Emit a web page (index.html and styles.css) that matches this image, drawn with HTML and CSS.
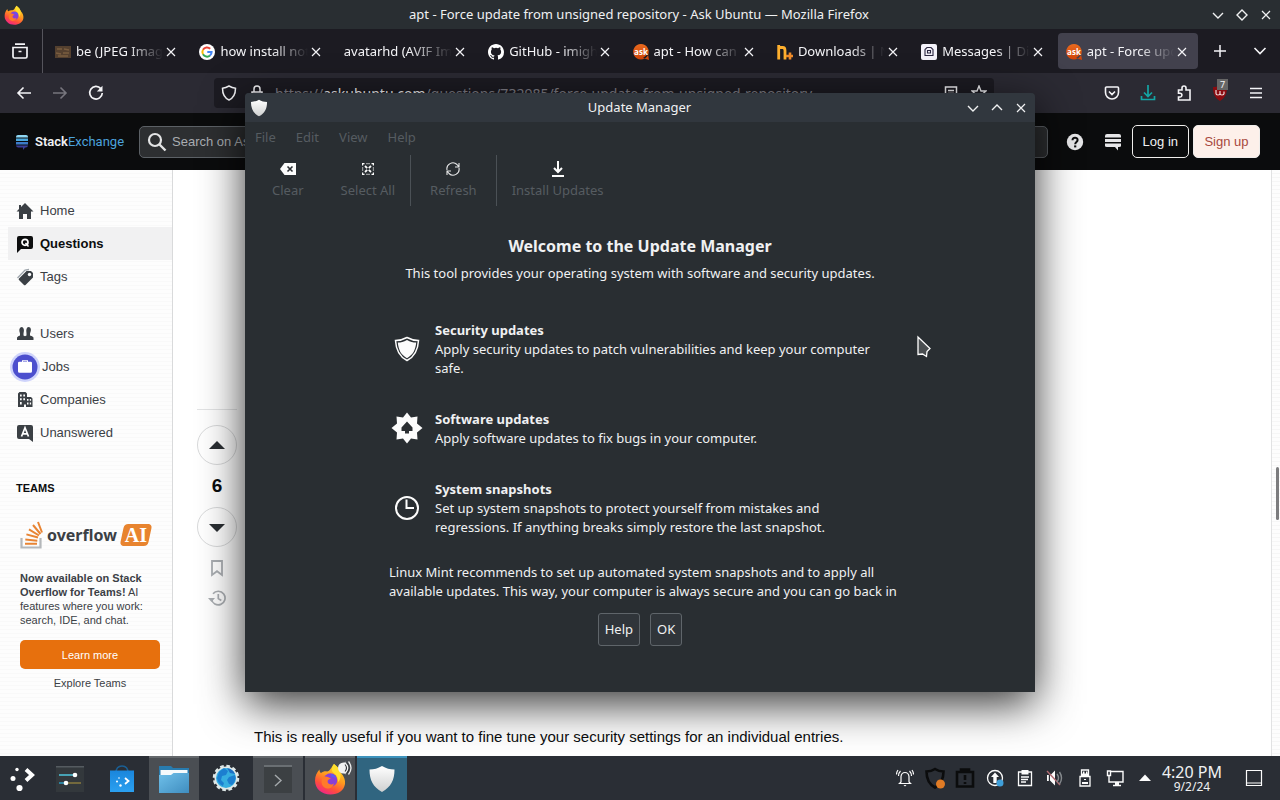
FILE: index.html
```html
<!DOCTYPE html>
<html lang="en">
<head>
<meta charset="utf-8">
<title>apt - Force update from unsigned repository - Ask Ubuntu</title>
<link rel="stylesheet" href="styles.css">
</head>
<body>
<svg class="defs" aria-hidden="true">
  <defs>
    <linearGradient id="fxBody" x1="0.8" y1="0" x2="0.3" y2="1"><stop offset="0" stop-color="#ffe226"/><stop offset="0.45" stop-color="#ff9a1f"/><stop offset="0.75" stop-color="#ff4f3a"/><stop offset="1" stop-color="#f0238c"/></linearGradient>
    <linearGradient id="folderGrad" x1="0" y1="0" x2="1" y2="1"><stop offset="0" stop-color="#6fc0ea"/><stop offset="1" stop-color="#3f8dbf"/></linearGradient>
    <linearGradient id="bagGrad" x1="0" y1="0" x2="0" y2="1"><stop offset="0" stop-color="#1a86dc"/><stop offset="1" stop-color="#2ba0f0"/></linearGradient>
    <linearGradient id="greyShield" x1="0" y1="0" x2="0" y2="1"><stop offset="0" stop-color="#ffffff"/><stop offset="1" stop-color="#cfd0d0"/></linearGradient>
    <linearGradient id="ask" x1="0" y1="0" x2="0" y2="1"><stop offset="0" stop-color="#e96a1e"/><stop offset="1" stop-color="#cf4208"/></linearGradient>
  </defs>
  <symbol id="i-close" viewBox="0 0 16 16"><path d="M4 4l8 8M12 4l-8 8" fill="none" stroke="currentColor" stroke-width="1.2"/></symbol>
  <symbol id="i-down" viewBox="0 0 16 16"><path d="M3 6l5 5 5-5" fill="none" stroke="currentColor" stroke-width="1.4"/></symbol>
  <symbol id="i-up" viewBox="0 0 16 16"><path d="M3 10l5-5 5 5" fill="none" stroke="currentColor" stroke-width="1.4"/></symbol>
  <symbol id="i-firefox" viewBox="0 0 32 32">
    <path d="M20 1c4 3 6 6 7 9 3 3 4.500 7 4 11-1 6.500-7 10.500-14.500 10.500C8 31.500 1 26 1 17.500 1 13 3 9 5.500 6.500c0 2 .5 3 1.500 3.500 2-1.500 4-2 6-1.500 3 0 4-4 7-7.500z" fill="url(#fxBody)"/>
    <circle cx="16.500" cy="17" r="6.800" fill="#8a3fd6"/>
    <path d="M9 14c3-1 6 0 8 2-3 0-4 2-3 4 1 1.500 4 2 6 .5-1 4-4 5.500-7 5-5-1-7-6-4-11.500z" fill="#ff7a2a"/>
    <path d="M20 1c4 3 6 6 6.500 9 .5 5-1 8-2.500 9 0-5-2-7.500-5-9.500-2-2.500-1-6 1-8.500z" fill="#ffdf2e"/>
    <path d="M17 11c3 0 5 2 5.500 5-1-1-3-2-5-1.500z" fill="#5b5ef0"/>
  </symbol>
  <symbol id="i-ask" viewBox="0 0 16 16">
    <path d="M8 0a7.800 7.800 0 1 1-.1 0zM10 14l6 2-1-6z" fill="url(#ask)"/>
    <text x="8" y="11" text-anchor="middle" class="ask-word">ask</text>
  </symbol>
  <symbol id="i-shield" viewBox="0 0 28 28"><path d="M14 1c4 2.500 8 3.500 12.500 3.500C26.500 15 23 22 14 27 5 22 1.500 15 1.500 4.500 6 4.500 10 3.500 14 1z" fill="url(#greyShield)"/></symbol>
</svg>

<div class="desktop">
  <div class="browser">
    <header class="titlebar">
      <svg class="i20"><use href="#i-firefox"/></svg>
      <h1 class="titlebar-text">apt - Force update from unsigned repository - Ask Ubuntu — Mozilla Firefox</h1>
      <div class="win-buttons">
        <button aria-label="Minimize"><svg class="i16"><use href="#i-down"/></svg></button>
        <button aria-label="Maximize"><svg class="i16" viewBox="0 0 16 16"><path d="M8 3l5 5-5 5-5-5z" fill="none" stroke="currentColor" stroke-width="1.400"/></svg></button>
        <button aria-label="Close"><svg class="i16"><use href="#i-close"/></svg></button>
      </div>
    </header>

    <nav class="tabbar">
      <button class="tab-side history-btn" aria-label="Recent browsing"><svg class="i20" viewBox="0 0 20 20"><path d="M5 3.200h10M3 6.500h14v9a1.500 1.500 0 0 1-1.500 1.500h-11A1.500 1.500 0 0 1 3 15.500zM8.500 10.500h3" fill="none" stroke="currentColor" stroke-width="1.700"/></svg></button>
      <div class="tabs">
        <div class="tab"><svg class="i16" viewBox="0 0 16 16"><path d="M0 2h16v12H0z" fill="#54402f"/><path d="M2 5h5M9 5l5 1M1 9l5 1M8 9h6M3 12h10" stroke="#7a5d40" stroke-width="1.300"/></svg><a href="#">be (JPEG Image, 1920)</a><button aria-label="Close tab"><svg class="i16"><use href="#i-close"/></svg></button></div>
        <div class="tab"><svg class="i16" viewBox="0 0 16 16"><circle cx="8" cy="8" r="8" fill="#fff"/><g fill="none" stroke-width="2"><path d="M11.200 4.700A4.600 4.600 0 0 0 4 5.700" stroke="#ea4335"/><path d="M4 5.700a4.600 4.600 0 0 0 0 4.600" stroke="#fbbc05"/><path d="M4 10.300a4.600 4.600 0 0 0 7 1.200" stroke="#34a853"/><path d="M11 11.500A4.600 4.600 0 0 0 12.600 8H8.300" stroke="#4285f4"/></g></svg><a href="#">how install notepad</a><button aria-label="Close tab"><svg class="i16"><use href="#i-close"/></svg></button></div>
        <div class="tab"><a href="#">avatarhd (AVIF Image, 800)</a><button aria-label="Close tab"><svg class="i16"><use href="#i-close"/></svg></button></div>
        <div class="tab"><svg class="i16" viewBox="0 0 16 16"><path fill="#fff" d="M8 0C3.580 0 0 3.580 0 8c0 3.540 2.290 6.530 5.470 7.590.4.070.550-.170.550-.380 0-.190-.010-.820-.010-1.490-2.010.370-2.530-.490-2.690-.940-.090-.230-.480-.940-.820-1.130-.280-.150-.680-.520-.010-.530.630-.010 1.080.580 1.230.820.720 1.210 1.870.870 2.330.660.070-.520.280-.870.510-1.070-1.780-.200-3.640-.890-3.640-3.950 0-.870.310-1.590.820-2.150-.080-.200-.360-1.020.080-2.120 0 0 .670-.210 2.200.820a7.600 7.600 0 0 1 4 0c1.530-1.040 2.200-.820 2.200-.820.440 1.100.160 1.920.080 2.120.510.560.820 1.270.820 2.150 0 3.070-1.870 3.750-3.650 3.950.290.250.540.730.540 1.480 0 1.070-.010 1.930-.010 2.200 0 .210.150.460.550.380A8 8 0 0 0 16 8c0-4.420-3.580-8-8-8z"/></svg><a href="#">GitHub - imightbe</a><button aria-label="Close tab"><svg class="i16"><use href="#i-close"/></svg></button></div>
        <div class="tab"><svg class="i16"><use href="#i-ask"/></svg><a href="#">apt - How can I get</a><button aria-label="Close tab"><svg class="i16"><use href="#i-close"/></svg></button></div>
        <div class="tab"><svg class="i16" viewBox="0 0 16 16"><path d="M1.700 15.500V1M1.700 3.500h4q2.300 0 2.300 3v9" fill="none" stroke="#ffb02e" stroke-width="2.800"/><path d="M9 12h7M13 8.500v7" stroke="#f08c2a" stroke-width="2.600"/></svg><a href="#">Downloads | Nexus</a><button aria-label="Close tab"><svg class="i16"><use href="#i-close"/></svg></button></div>
        <div class="tab"><svg class="i16" viewBox="0 0 16 16"><rect width="16" height="16" rx="2" fill="#f4f2fa"/><path d="M4 11.500V5.500l2-2h4l2 2v6zM6.500 6.500h3v2.500h-3zM4 11.500h8" fill="none" stroke="#2b2740" stroke-width="1.100"/></svg><a href="#">Messages | Discuss</a><button aria-label="Close tab"><svg class="i16"><use href="#i-close"/></svg></button></div>
        <div class="tab active"><svg class="i16"><use href="#i-ask"/></svg><a href="#" aria-current="page">apt - Force update</a><button aria-label="Close tab"><svg class="i16"><use href="#i-close"/></svg></button></div>
      </div>
      <button class="tab-side" aria-label="New tab"><svg class="i16" viewBox="0 0 16 16"><path d="M8 2v12M2 8h12" stroke="currentColor" stroke-width="1.500"/></svg></button>
      <button class="tab-side" aria-label="List all tabs"><svg class="i16" viewBox="0 0 16 16"><path d="M2.500 5l5.500 5.500L13.500 5" fill="none" stroke="currentColor" stroke-width="1.600"/></svg></button>
    </nav>

    <div class="navbar">
      <div class="nav-group">
        <button aria-label="Back"><svg class="i16" viewBox="0 0 16 16"><path d="M7.500 2.500L2 8l5.500 5.500M2 8h13" fill="none" stroke="currentColor" stroke-width="1.600"/></svg></button>
        <button class="dim" aria-label="Forward"><svg class="i16" viewBox="0 0 16 16"><path d="M8.500 2.500L14 8l-5.500 5.500M14 8H1" fill="none" stroke="currentColor" stroke-width="1.600"/></svg></button>
        <button aria-label="Reload"><svg class="i16" viewBox="0 0 16 16"><path d="M12.800 3.600A6.300 6.300 0 1 0 14.300 8" fill="none" stroke="currentColor" stroke-width="1.700"/><path d="M14.500.8v5.700H8.800z" fill="currentColor"/></svg></button>
      </div>
      <div class="urlbar">
        <svg class="i16" viewBox="0 0 16 16"><path d="M8 1c2.500 1.500 4 2 6.500 2.300C14.500 9 12.500 13 8 15 3.500 13 1.500 9 1.500 3.300 4 3 5.500 2.500 8 1z" fill="none" stroke="currentColor" stroke-width="1.500"/></svg>
        <svg class="i16" viewBox="0 0 16 16"><path d="M3 7h10v7H3zM5 7V4a3 3 0 0 1 6 0v3" fill="none" stroke="currentColor" stroke-width="1.500"/></svg>
        <a class="url" href="#">https://<b>askubuntu.com</b>/questions/732985/force-update-from-unsigned-repository</a>
        <svg class="i16" viewBox="0 0 16 16"><path d="M2.500 2h11v12h-11zM5 5.500h6M5 8.500h6" fill="none" stroke="currentColor" stroke-width="1.500"/></svg>
        <svg class="i16" viewBox="0 0 16 16"><path d="M8 1l2 5h5l-4 3.500 1.500 5L8 11.500l-4.500 3 1.500-5L1 6h5z" fill="none" stroke="currentColor" stroke-width="1.400"/></svg>
      </div>
      <div class="nav-group">
        <button aria-label="Pocket"><svg class="i16" viewBox="0 0 16 16"><path d="M2.500 2h11a1 1 0 0 1 1 1v4.500a6.500 6.500 0 0 1-13 0V3a1 1 0 0 1 1-1zM5 6.500l3 3 3-3" fill="none" stroke="currentColor" stroke-width="1.600"/></svg></button>
        <button class="teal" aria-label="Downloads"><svg class="i16" viewBox="0 0 16 16"><path d="M8 0v11M4 7.500l4 4 4-4M1.500 11v3.500h13V11" fill="none" stroke="currentColor" stroke-width="1.700"/></svg></button>
        <button aria-label="Extensions"><svg class="i16" viewBox="0 0 16 16"><path d="M2.500 5H6V3a2 2 0 0 1 4 0v2h4v10H2.500v-3H4a1.800 1.800 0 0 0 0-3.800H2.500z" fill="none" stroke="currentColor" stroke-width="1.600"/></svg></button>
        <button class="ublock" aria-label="uBlock Origin"><svg class="i16" viewBox="0 0 16 16"><path d="M8 0c2 1.500 4 2 7 2 0 7-2 11-7 14C3 13 1 9 1 2c3 0 5-.5 7-2z" fill="#8a0b10"/><path d="M4 5v3.500q0 1.500 2 1.500t2-1.500V6M8 8.500q0 1.500 2 1.500t2-1.500V6.500" fill="none" stroke="#f0d8d8" stroke-width="1.200"/></svg><span class="badge">7</span></button>
        <button aria-label="Menu"><svg class="i16" viewBox="0 0 16 16"><path d="M2 3.500h12M2 8h12M2 12.500h12" stroke="currentColor" stroke-width="1.500"/></svg></button>
      </div>
    </div>

    <div class="se-header">
      <a class="se-logo" href="#"><svg class="i16" viewBox="0 0 16 16"><path d="M2 3.500V3q0-2 2-2h8q2 0 2 2v.5z" fill="#8fd8f5"/><path d="M2 4.500h12v2.500H2z" fill="#4aa8dc"/><path d="M2 8h12v2.500H2z" fill="#3c7cc8"/><path d="M2 11.500h12q0 1.500-2 2h-1L9 16v-2.500H4q-2-.5-2-2z" fill="#3b3f98"/></svg><span>Stack<i>Exchange</i></span></a>
      <label class="se-search"><svg class="i20" viewBox="0 0 20 20"><circle cx="8" cy="8" r="6" fill="none" stroke="currentColor" stroke-width="2.200"/><path d="M12.500 12.500l6 6" stroke="currentColor" stroke-width="2.400"/></svg><input type="text" placeholder="Search on Ask Ubuntu…" aria-label="Search"></label>
      <button class="se-icon" aria-label="Help"><svg class="i18" viewBox="0 0 18 18"><circle cx="9" cy="9" r="8.200" fill="#e6e6e8"/><path d="M6.500 7.200C6.500 4 11.600 4 11.600 7 11.600 9 9.200 9 9.200 11.200" fill="none" stroke="#0c0d0e" stroke-width="2"/><path d="M8.100 12.400h2.200v2H8.100z" fill="#0c0d0e"/></svg></button>
      <button class="se-icon" aria-label="Site list"><svg class="i18" viewBox="0 0 18 18"><path d="M1 3q0-2 2-2h12q2 0 2 2v1.500H1zM1 6h16v3H1zM1 10.500h16V13q0 1-2 1h-1v3.500L11 14H3q-2 0-2-1z" fill="#e6e6e8"/></svg></button>
      <a class="btn-login" href="#">Log in</a>
      <a class="btn-signup" href="#">Sign up</a>
    </div>

    <div class="page">
      <aside class="sidebar">
        <nav>
          <a class="item" href="#"><svg class="i18" viewBox="0 0 18 18"><path d="M9 1l8.500 8.500H15V17h-4v-5H7v5H3V9.500H.5L3 7V3h2v2z" fill="#3b4045"/></svg>Home</a>
          <a class="item current" href="#"><svg class="i18" viewBox="0 0 18 18"><path d="M3 1h12q2 0 2 2v9q0 2-2 2H5l-4 4V3q0-2 2-2z" fill="#0c0d0e"/><circle cx="9" cy="7.300" r="3" fill="none" stroke="#fff" stroke-width="1.700"/><path d="M9.500 8l3 3.500" stroke="#fff" stroke-width="1.500"/></svg>Questions</a>
          <a class="item" href="#"><svg class="i18" viewBox="0 0 18 18"><path d="M10.500 3H15l2 2v4.500L9.500 17q-1 .5-1.500 0L3 12q-.8-.8 0-1.500z" fill="#3b4045"/><path d="M1.500 10L9 2l4-.5" fill="none" stroke="#9fa6ad" stroke-width="1.300"/><circle cx="13.500" cy="6.500" r="1.700" fill="#fff"/></svg>Tags</a>
          <a class="item group" href="#"><svg class="i18" viewBox="0 0 18 18"><path d="M1 15v-2.500q1-1.500 3-2V8.500Q2 3 5.500 2 9 2.500 7.500 8.500v2l1.500.7 1.500-.7v-2q-1-6 2-6.500 4 .5 1.500 6.500v2q2.500.5 3.500 2V15z" fill="#3b4045"/></svg>Users</a>
          <a class="item jobs" href="#"><svg class="i30" viewBox="0 0 30 30"><circle cx="15" cy="15" r="15" fill="#cfd4fb"/><circle cx="15" cy="15" r="12.500" fill="#4c4fce"/><path fill-rule="evenodd" d="M8 11q0-1.300 1.300-1.300H12V8.200h6v1.500h2.700q1.300 0 1.300 1.300v8.200q0 1.500-1.500 1.500h-11Q8 20.700 8 19.200zM13 9.200v.6h4v-.6z" fill="#fff"/></svg>Jobs</a>
          <a class="item" href="#"><svg class="i18" viewBox="0 0 18 18"><path fill-rule="evenodd" d="M3.500 1h6L11 2.500V6h4l1.500 1.500V16H10v-2.500H8V16H2V2.500zM4 3.500v2h1.700v-2zM7.300 3.500v2H9v-2zM4 7.200v2h1.700v-2zM7.300 7.200v2H9v-2zM11 8v1.800h1.500V8zM13.800 8v1.800h1.300V8zM4 11v2.500h1.700V11zM11 11.500v2h1.500v-2zM13.800 11.500v2h1.300v-2z" fill="#3b4045"/></svg>Companies</a>
          <a class="item" href="#"><svg class="i18" viewBox="0 0 18 18"><path d="M3 1h12q2 0 2 2v15l-4-3H3q-2 0-2-2V3q0-2 2-2z" fill="#3b4045"/><path d="M5.500 12.500L9 3.800l3.500 8.700M6.500 9.800h5" fill="none" stroke="#fff" stroke-width="1.700"/></svg>Unanswered</a>
        </nav>
        <h2 class="teams-title">Teams</h2>
        <div class="teams">
          <div class="ai-logo">
            <svg viewBox="0 0 24 28" class="ai-mark"><path d="M1.500 17v9.500h19V17" fill="none" stroke="#b4b7ba" stroke-width="2.200"/><path d="M5 22.800h12M5.300 18.500l12 1.200M6.400 13.400l11.600 3.100M9 8.300l10 6.200M13 4l7.500 9M18 1l4 10.500" stroke="#e88433" stroke-width="2"/></svg>
            <span class="ai-word">overflow</span><span class="ai-tag">AI</span>
          </div>
          <p><b>Now available on Stack Overflow for Teams!</b> AI features where you work: search, IDE, and chat.</p>
          <a class="learn" href="#">Learn more</a>
          <a class="explore" href="#">Explore Teams</a>
        </div>
      </aside>
      <main class="post">
        <div class="votes">
          <button class="vote" aria-label="Up vote"><svg class="i18" viewBox="0 0 18 18"><path d="M1 13h16L9 5z" fill="#2b2f33"/></svg></button>
          <span class="score">6</span>
          <button class="vote" aria-label="Down vote"><svg class="i18" viewBox="0 0 18 18"><path d="M1 6h16l-8 8z" fill="#2b2f33"/></svg></button>
          <button class="mini" aria-label="Bookmark"><svg class="i18" viewBox="0 0 18 18"><path d="M4 2h10v14l-5-3.800L4 16z" fill="none" stroke="#aaaeb2" stroke-width="1.800"/></svg></button>
          <button class="mini" aria-label="Timeline"><svg class="i18" viewBox="0 0 18 18"><path d="M3.500 10A6.800 6.800 0 1 0 5 4.700M10.300 5v4.500l3 2" fill="none" stroke="#aaaeb2" stroke-width="1.700"/><path d="M0 9h7l-3.500 4z" fill="#aaaeb2"/></svg></button>
        </div>
        <p class="post-text">This is really useful if you want to fine tune your security settings for an individual entries.</p>
      </main>
      <div class="scroll"><span class="thumb"></span></div>
    </div>
  </div>

  <section class="dialog" aria-label="Update Manager">
    <header class="dialog-title">
      <svg class="i18"><use href="#i-shield"/></svg>
      <h2>Update Manager</h2>
      <div class="win-buttons">
        <button aria-label="Minimize"><svg class="i16"><use href="#i-down"/></svg></button>
        <button aria-label="Maximize"><svg class="i16"><use href="#i-up"/></svg></button>
        <button aria-label="Close"><svg class="i16"><use href="#i-close"/></svg></button>
      </div>
    </header>
    <div class="menubar"><button>File</button><button>Edit</button><button>View</button><button>Help</button></div>
    <div class="tools">
      <button><svg class="i16" viewBox="0 0 16 16"><path d="M0 8l4.500-6H16v12H4.500z" fill="#fcfcfc"/><path d="M7.500 5.500l5 5M12.500 5.500l-5 5" stroke="#2a2e32" stroke-width="1.600"/></svg>Clear</button>
      <button><svg class="i16" viewBox="0 0 16 16"><path d="M2.600 4.500V2.600h1.900M11.500 2.600h1.900v1.900M13.400 11.500v1.900h-1.900M4.500 13.400H2.600v-1.900M6.500 2.600h1M8.500 2.600h1M6.500 13.400h1M8.500 13.400h1M2.600 6.500v1M2.600 8.500v1M13.400 6.500v1M13.400 8.500v1" fill="none" stroke="#fcfcfc" stroke-width="1.200"/><path d="M5 5l2.200 2.200M11 5L8.800 7.200M5 11l2.200-2.200M11 11L8.800 8.800" stroke="#fcfcfc" stroke-width="1.800"/></svg>Select All</button>
      <button class="ruled"><svg class="i16" viewBox="0 0 16 16"><path d="M2 9A6 6 0 0 1 12 3.500L14 6M14 2v4h-4M14 7A6 6 0 0 1 4 12.500L2 10M2 14v-4h4" fill="none" stroke="#e6e7e8" stroke-width="1.100"/></svg>Refresh</button>
      <button><svg class="i16" viewBox="0 0 16 16"><path d="M8 0v11M4 7l4 4 4-4M2 15h12" fill="none" stroke="#fcfcfc" stroke-width="2"/></svg>Install Updates</button>
    </div>
    <div class="welcome">
      <h3>Welcome to the Update Manager</h3>
      <p class="lead">This tool provides your operating system with software and security updates.</p>
      <ul class="features">
        <li><svg class="i32" viewBox="0 0 32 32"><path d="M16 4.500c4 2.200 7 3 11.500 3C27 17 24 23.500 16 27.500 8 23.500 5 17 4.500 7.500c4.500 0 7.500-.8 11.500-3z" fill="none" stroke="#fcfcfc" stroke-width="1.500"/><path d="M16 7c3.500 1.800 6 2.500 9.200 2.600C24.500 17 22 22 16 25.200 10 22 7.500 17 6.800 9.600 10 9.500 12.500 8.800 16 7z" fill="#fcfcfc"/></svg><div><h4>Security updates</h4><p>Apply security updates to patch vulnerabilities and keep your computer safe.</p></div></li>
        <li><svg class="i32" viewBox="0 0 32 32"><path d="M16 .5l4 5 6.500-1L26 11.500l5.500 4.500-5.500 4.500.5 7-6.500-1-4 5-4-5-6.500 1 .5-7L.5 16 6 11.500l-.5-7 6.500 1z" fill="#fcfcfc"/><path d="M16 9.500l5.500 6V19H18v2.500h-4V19h-3.500v-3.500z" fill="#2a2e32"/></svg><div><h4>Software updates</h4><p>Apply software updates to fix bugs in your computer.</p></div></li>
        <li><svg class="i32" viewBox="0 0 32 32"><circle cx="16" cy="16" r="11" fill="none" stroke="#fcfcfc" stroke-width="2"/><path d="M15.500 7.500V16H23" fill="none" stroke="#fcfcfc" stroke-width="2"/></svg><div><h4>System snapshots</h4><p>Set up system snapshots to protect yourself from mistakes and regressions. If anything breaks simply restore the last snapshot.</p></div></li>
      </ul>
      <p class="note">Linux Mint recommends to set up automated system snapshots and to apply all available updates. This way, your computer is always secure and you can go back in</p>
      <div class="actions"><button>Help</button><button>OK</button></div>
    </div>
    <svg class="cursor" viewBox="0 0 16 24"><path d="M2 2v17.500l4.500-.5 4 2.500.5-5 3-3z" fill="#4a4e51" stroke="#fff" stroke-width="1.300"/></svg>
  </section>

  <footer class="taskbar">
    <div class="launchers">
      <button class="start" aria-label="Application launcher"><svg class="i32" viewBox="0 0 32 32"><circle cx="11" cy="7.500" r="1.700" fill="#fff"/><circle cx="7" cy="16.500" r="2.500" fill="#fff"/><circle cx="13.500" cy="26" r="3.100" fill="#fff"/><path d="M20 7.500l6 5.500-6 5.500" fill="none" stroke="#fff" stroke-width="4"/></svg></button>
      <button aria-label="System Settings"><svg class="i32" viewBox="0 0 32 32"><path d="M2 4h28v26H2z" fill="#33383c"/><path d="M2 4h28v1.500H2z" fill="#555b60"/><path d="M5 13h14" stroke="#4fc6dc" stroke-width="1.500"/><path d="M5 21h6" stroke="#2d9bc0" stroke-width="1.500"/><path d="M14 21h13" stroke="#8a7a3e" stroke-width="1.500"/><circle cx="21" cy="13" r="2.300" fill="#fff"/><circle cx="12" cy="21" r="2.300" fill="#fff"/></svg></button>
      <button aria-label="Discover"><svg class="i32" viewBox="0 0 32 32"><path d="M10 11q0-7 6-7t6 7" fill="none" stroke="#1a5f94" stroke-width="1.500"/><path d="M4 8.500h24V30H4z" fill="url(#bagGrad)"/><path d="M19 16l3.500 3-3.500 3" fill="none" stroke="#fff" stroke-width="1.800"/><circle cx="13" cy="16" r=".8" fill="#fff"/><circle cx="11" cy="19.500" r="1" fill="#fff"/><circle cx="14.500" cy="23.500" r="1.200" fill="#fff"/></svg></button>
      <button class="open" aria-label="Files"><svg class="i32" viewBox="0 0 32 32"><path d="M1 3h12l2 2h16v8H1z" fill="#287bae"/><path d="M2.500 7h27v7h-27z" fill="#f5fafc"/><path d="M1 12h12l2.500-2H31v20H1z" fill="url(#folderGrad)"/></svg></button>
      <button aria-label="Web browser"><svg class="i32" viewBox="0 0 32 32"><circle cx="16" cy="16" r="11.500" fill="#dfe8e8" stroke="#dfe8e8" stroke-width="3.500" stroke-dasharray="3.500 2.520"/><circle cx="16" cy="16" r="10" fill="#36aee0"/><path d="M9 10l5-4 4 3-2 4-4 1-1 4 3 3-1 3q-5-2-6-8zM19 15l6-2q2 5-3 10l-3-1-2-4z" fill="#1c7fd0"/><path d="M17 6q6 1 8 6l-5-1z" fill="#1c6fc4"/></svg></button>
      <button class="open" aria-label="Terminal"><svg class="i32" viewBox="0 0 32 32"><path d="M2 3h28v27H2z" fill="#3c4043"/><path d="M2 2h28v2H2z" fill="#6a6f73"/><path d="M13 12l6 5.500-6 5.500" fill="none" stroke="#a5a9ac" stroke-width="1.400"/></svg></button>
      <button class="open" aria-label="Firefox"><svg class="i32"><use href="#i-firefox"/></svg><svg class="audio" viewBox="0 0 16 16"><path d="M2 5.500h3l3.500-4v13L5 10.500H2z" fill="#fcfcfc"/><circle cx="6.500" cy="8" r="5.500" fill="#f2f2f2"/><path d="M8 4.500q3 3.500 0 7M10 3q4 5 0 10" fill="none" stroke="#303438" stroke-width="1.100"/><path d="M11.500 1.500q5 6.500 0 13" fill="none" stroke="#eceded" stroke-width="1.300"/></svg></button>
      <button class="focus" aria-label="Update Manager"><svg class="i28"><use href="#i-shield"/></svg></button>
    </div>
    <div class="tray">
      <button aria-label="Notifications"><svg class="i18" viewBox="0 0 18 18"><path d="M5 13V7.500Q5.500 3.500 9 3.500t4 4V13l1.500 1.500h-11zM4.500 2Q2.500 4 2.500 7M2 1Q.5 3 .5 5.500M13.500 2q2 2 2 5M16 1q1.500 2 1.500 4.500" fill="none" stroke="#fcfcfc" stroke-width="1.200"/><path d="M7.500 16h3l-1.500 1.500z" fill="#fcfcfc"/></svg></button>
      <button aria-label="Updates available"><svg class="i22" viewBox="0 0 22 22"><path d="M11 2c3 2 5.500 2.500 8.500 2.500C19.500 12 17.500 17 11 20.500 4.500 17 2.500 12 2.500 4.500 5.500 4.500 8 4 11 2z" fill="none" stroke="#0b0c0d" stroke-width="2.600"/><circle cx="16.500" cy="17" r="4.500" fill="#e07b25"/></svg></button>
      <button aria-label="System reports"><svg class="i22" viewBox="0 0 22 22"><path d="M3 5h16v14.500H3zM7 2.500h8V5H7zM11 8v5M11 15v2" fill="none" stroke="#0b0c0d" stroke-width="2.600"/></svg></button>
      <button aria-label="Software updates"><svg class="i18" viewBox="0 0 18 18"><circle cx="9" cy="9" r="7.500" fill="none" stroke="#fcfcfc" stroke-width="1.300"/><path d="M9 3.500l4 4.500h-2.300v6H7.300V8H5z" fill="#fcfcfc"/><circle cx="14" cy="14" r="3.500" fill="#3f9fda"/></svg></button>
      <button aria-label="Clipboard"><svg class="i18" viewBox="0 0 18 18"><path d="M2.500 3h13v13.500h-13zM5 8h8M5 10.500h7M5 13h5" fill="none" stroke="#fcfcfc" stroke-width="1.300"/><path d="M5.500 1h7v4.500h-7z" fill="#fcfcfc"/></svg></button>
      <button aria-label="Volume muted"><svg class="i18" viewBox="0 0 18 18"><path d="M1 6v6h1.800V6zM4 6.500l5-5v15l-5-5z" fill="#fcfcfc"/><path d="M1 2l13 14" stroke="#b06a72" stroke-width="1.400"/><path d="M11 5q3 4 0 8M13.500 3q4 6 0 12" fill="none" stroke="#85898d" stroke-width="1.400"/></svg></button>
      <button aria-label="Removable devices"><svg class="i18" viewBox="0 0 18 18"><path d="M5.500 1h7v6.500h-7zM4 7.500h10V17H4z" fill="none" stroke="#fcfcfc" stroke-width="1.300"/><path d="M5.500 4.500h7v3h-7zM7 2.500h1.500v2H7zM10 2.500h1.500v2H10zM6 13h6v2H6z" fill="#fcfcfc"/><path d="M8 10.500h2" stroke="#fcfcfc"/></svg></button>
      <button aria-label="Network"><svg class="i18" viewBox="0 0 18 18"><path d="M5 2.500h12v10.500H4.500M1.500 2v4.500h3V2zM3 6.500V13h4M7 16.500h8" fill="none" stroke="#fcfcfc" stroke-width="1.400"/><path d="M9 13h4v3H9z" fill="#fcfcfc"/></svg></button>
      <button aria-label="Show hidden icons"><svg class="i18" viewBox="0 0 18 18"><path d="M3 12l6-6.500 6 6.500z" fill="#fcfcfc"/></svg></button>
      <div class="clock"><time class="time">4:20 PM</time><span class="date">9/2/24</span></div>
      <button aria-label="Show desktop"><svg class="i18" viewBox="0 0 18 18"><path d="M1.500 1.500h15v15h-15zM1.500 14h15" fill="none" stroke="#fcfcfc" stroke-width="1.200"/></svg></button>
    </div>
  </footer>
</div>
</body>
</html>
```

FILE: styles.css
```css
* { box-sizing: border-box; }
body, h1, h2, h3, h4, p, ul { margin: 0; padding: 0; }
body { font: 13px/19px "Noto Sans", sans-serif; color: #f0f1f2; }
button { border: 0; padding: 0; background: none; color: inherit; font: inherit; display: inline-flex; align-items: center; justify-content: center; }
a { color: inherit; text-decoration: none; }
ul { list-style: none; }
svg { flex: none; display: block; }
.defs { position: absolute; width: 0; height: 0; }
.i16 { width: 16px; height: 16px; }
.i18 { width: 18px; height: 18px; }
.i20 { width: 20px; height: 20px; }
.i22 { width: 22px; height: 22px; }
.i28 { width: 28px; height: 28px; }
.i30 { width: 30px; height: 30px; }
.i32 { width: 32px; height: 32px; }
.ask-word { font: bold 8px "Open Sans", sans-serif; fill: #fff; }

.desktop { position: relative; display: flex; flex-direction: column; height: 100vh; overflow: hidden; background: #fff; }
.browser { flex: 1; min-height: 0; display: flex; flex-direction: column; }

/* Window title bar */
.titlebar { display: grid; grid-template-columns: 1fr auto 1fr; align-items: center; height: 29px; padding: 0 6px 0 4px; background: #292e32; }
.titlebar-text { font-size: 13px; font-weight: 400; }
.win-buttons { display: flex; justify-content: flex-end; gap: 8px; }

/* Tabs */
.tabbar { display: flex; height: 44px; background: #1c1b22; color: #f4f4f7; }
.tab-side { width: 40px; }
.history-btn { width: 43px; padding-right: 3px; border-right: 1px solid #55545c; margin-right: 2px; }
.tabs { flex: 1; display: flex; min-width: 0; }
.tab { flex: 1; min-width: 0; display: flex; align-items: center; gap: 5px; margin: 4px 2px; padding: 1px 8px 0; border-radius: 4px; }
.tab a { flex: 1; min-width: 0; overflow: hidden; white-space: nowrap; mask-image: linear-gradient(to right, #000 60%, transparent 100%); }
.tab button { margin-left: -5px; }
.tab.active { background: #42414d; }

/* Navigation bar */
.navbar { display: flex; align-items: center; gap: 110px; height: 40px; padding: 0 16px; background: #2b2a33; color: #f4f4f7; }
.nav-group { display: flex; gap: 20px; }
.nav-group .dim { color: #77767e; }
.nav-group .teal { color: #14a5a5; }
.ublock { position: relative; }
.badge { position: absolute; left: 5px; top: -6px; padding: 0 3px; background: #666; font-size: 9px; line-height: 11px; }
.urlbar { flex: 1; min-width: 0; display: flex; align-items: center; gap: 12px; height: 30px; padding: 0 7px; border-radius: 4px; background: #1c1b22; }
.url { flex: 1; overflow: hidden; white-space: nowrap; font-size: 14px; color: #82818a; margin-left: -2px; }
.url b { font-weight: 400; color: #f4f4f7; }

/* Stack Exchange header */
.se-header { display: flex; align-items: center; height: 57px; padding: 0 20px 0 14px; background: #0b0c0d; font: 13px/17px "Liberation Sans", Arial, sans-serif; }
.se-logo { display: flex; align-items: center; gap: 5px; margin-right: 15px; font: 600 13px/18px Roboto, sans-serif; }
.se-logo i { font-style: normal; font-weight: 400; color: #4ba3dc; }
.se-search { flex: 1; display: flex; align-items: center; gap: 3px; height: 32px; padding: 0 7px; border: 1px solid #5c6166; border-radius: 5px; background: #2d2f31; color: #e3e4e5; }
.se-search input { flex: 1; border: 0; outline: 0; background: none; font: inherit; color: inherit; }
.se-search input::placeholder { color: #a9adb1; opacity: 1; }
.se-icon { width: 38px; }
.se-search + .se-icon { margin-left: 8px; }
.btn-login, .btn-signup { padding: 7px 10px; border: 1px solid #f0eeec; border-radius: 5px; text-align: center; }
.btn-login { margin-right: 4px; }
.btn-signup { min-width: 67px; background: #fdf0ea; color: #a8483d; }

/* Page */
.page { flex: 1; min-height: 0; display: flex; background: #fff; font-family: "Liberation Sans", Arial, sans-serif; color: #3b4045; }
.sidebar { width: 173px; border-right: 1px solid #d9dadb; padding-top: 24px; background: repeating-linear-gradient(#fdfdfd 0 3px, #f9f9f9 3px 4px); }
.item { display: flex; align-items: center; gap: 6px; height: 33px; margin-left: 8px; padding-left: 8px; font-size: 13px; }
.item.group { margin-top: 24px; }
.item.current { background: #f1f1f2; color: #0c0d0e; font-weight: 700; }
.item.jobs { padding-left: 2px; gap: 2px; }
.teams-title { margin: 30px 0 0 16px; font-size: 11px; text-transform: uppercase; color: #0c0d0e; }
.teams { display: flex; flex-direction: column; padding: 22px 12px 0 20px; font-size: 11px; line-height: 14px; }
.ai-logo { display: flex; align-items: center; height: 30px; color: #3b4045; }
.ai-mark { width: 24px; height: 28px; }
.ai-word { margin: 0 5px 0 3px; font: 700 16px/24px "Noto Sans", sans-serif; }
.ai-tag { position: relative; z-index: 0; width: 28px; color: #fff; font: 700 20px/22px "Liberation Serif", serif; text-align: center; }
.ai-tag::before { content: ""; position: absolute; inset: 0; z-index: -1; border-radius: 4px; background: #e8842f; transform: skewX(-12deg); }
.teams p { margin: 21px 0 13px; }
.learn { display: block; padding: 8px 0 7px; border-radius: 5px; background: #e7700d; color: #fff; text-align: center; }
.explore { margin-top: 7px; text-align: center; }

.post { flex: 1; display: flex; flex-direction: column; justify-content: space-between; }
.votes { display: flex; flex-direction: column; align-items: center; width: 40px; margin: 239px 0 0 24px; padding-top: 15px; border-top: 1px solid #e3e4e5; }
.vote { width: 40px; height: 40px; border: 1px solid #d9dadb; border-radius: 50%; }
.score { margin: 11px 0; font-weight: 700; font-size: 19px; line-height: 20px; color: #0c0d0e; }
.mini { margin-top: 12px; }
.post-text { margin: 0 0 9px 81px; font-size: 15px; line-height: 20px; color: #0c0d0e; }
.scroll { display: flex; justify-content: flex-end; width: 9px; padding: 297px 1px 0 0; border-left: 1px solid #e1e2e3; background: repeating-linear-gradient(#fdfdfd 0 3px, #f6f6f6 3px 4px); }
.thumb { width: 3px; height: 53px; border-radius: 2px; background: #7c7c7e; }

/* Update Manager window */
.dialog { position: absolute; top: 93px; left: calc(50% - 395px); width: 790px; min-height: 599px; border-radius: 4px 4px 0 0; background: #292e32; box-shadow: 0 12px 44px rgba(0, 0, 0, 0.8); }
.dialog-title { display: grid; grid-template-columns: 1fr auto 1fr; align-items: center; height: 29px; padding: 0 6px 0 5px; border-radius: 4px 4px 0 0; background: #31373e; }
.dialog-title h2 { font-size: 13px; font-weight: 400; }
.menubar { display: flex; height: 30px; color: #565c61; }
.menubar button { padding: 0 10px; }
.tools { display: flex; padding: 3px 0 0 11px; color: #565c61; }
.tools button { flex-direction: column; justify-content: flex-start; gap: 4px; height: 51px; padding: 6px 16px 0; }
.tools button + button { margin-left: 5px; }
.tools button.ruled { margin-left: -1px; padding: 6px 19px 0; border: solid #4b5156; border-width: 0 1px; }
.tools .ruled + button { margin-left: -1px; }
.welcome { width: 504px; margin: 0 auto; padding-top: 28px; }
.welcome h3 { text-align: center; font-size: 16px; line-height: 24px; }
.lead { margin-top: 6px; text-align: center; }
.features { display: grid; gap: 32px; margin-top: 38px; }
.features li { display: flex; align-items: center; gap: 12px; padding-left: 3px; }
.features li svg { margin-bottom: 2px; }
.features h4 { font-size: 13px; }
.note { margin: 26px -8px 12px 0; padding-left: 1px; }
.actions { display: flex; justify-content: center; gap: 10px; }
.actions button { height: 33px; padding: 0 6px; border: 1px solid #5f656a; border-radius: 3px; background: #30353a; }
.cursor { position: absolute; left: 671px; top: 242px; width: 16px; height: 24px; }

/* Task bar */
.taskbar { display: flex; justify-content: space-between; height: 44px; background: #2a2e35; }
.launchers { display: flex; gap: 2px; }
.launchers button { position: relative; width: 50px; }
.launchers .start { width: 43px; }
.launchers .open { background: #4a4e53; border-top: 2px solid #63676b; }
.launchers .focus { background: #306580; border-top: 2px solid #3d93bd; }
.audio { position: absolute; right: 2px; top: 2px; width: 16px; height: 16px; }
.tray { display: flex; align-items: center; padding-right: 11px; }
.tray button { width: 30px; }
.clock { display: flex; flex-direction: column; align-items: center; margin: 0 17px 0 2px; }
.time { font-size: 16px; line-height: 18px; }
.date { font-size: 12px; line-height: 12px; }
```
